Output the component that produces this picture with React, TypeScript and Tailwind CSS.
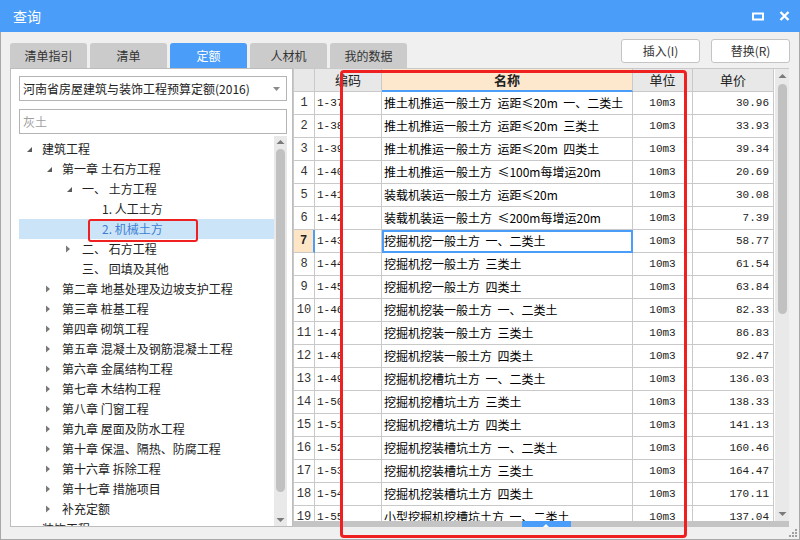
import React from 'react';

const rows: [string, string, string][] = [
  ['1-37', '推土机推运一般土方  运距≤20m  一、二类土', '30.96'],
  ['1-38', '推土机推运一般土方  运距≤20m  三类土', '33.93'],
  ['1-39', '推土机推运一般土方  运距≤20m  四类土', '39.34'],
  ['1-40', '推土机推运一般土方  ≤100m每增运20m', '20.69'],
  ['1-41', '装载机装运一般土方  运距≤20m', '30.08'],
  ['1-42', '装载机装运一般土方  ≤200m每增运20m', '7.39'],
  ['1-43', '挖掘机挖一般土方  一、二类土', '58.77'],
  ['1-44', '挖掘机挖一般土方  三类土', '61.54'],
  ['1-45', '挖掘机挖一般土方  四类土', '63.84'],
  ['1-46', '挖掘机挖装一般土方  一、二类土', '82.33'],
  ['1-47', '挖掘机挖装一般土方  三类土', '86.83'],
  ['1-48', '挖掘机挖装一般土方  四类土', '92.47'],
  ['1-49', '挖掘机挖槽坑土方  一、二类土', '136.03'],
  ['1-50', '挖掘机挖槽坑土方  三类土', '138.33'],
  ['1-51', '挖掘机挖槽坑土方  四类土', '141.13'],
  ['1-52', '挖掘机挖装槽坑土方  一、二类土', '160.46'],
  ['1-53', '挖掘机挖装槽坑土方  三类土', '164.47'],
  ['1-54', '挖掘机挖装槽坑土方  四类土', '170.11'],
  ['1-55', '小型挖掘机挖槽坑土方  一、二类土', '137.04'],
];

type TreeNode = { label: string; level: number; arrow?: 'open' | 'closed'; selected?: boolean };

const tree: TreeNode[] = [
  { label: '建筑工程', level: 0, arrow: 'open' },
  { label: '第一章 土石方工程', level: 1, arrow: 'open' },
  { label: '一、 土方工程', level: 2, arrow: 'open' },
  { label: '1. 人工土方', level: 3 },
  { label: '2. 机械土方', level: 3, selected: true },
  { label: '二、 石方工程', level: 2, arrow: 'closed' },
  { label: '三、 回填及其他', level: 2 },
  { label: '第二章 地基处理及边坡支护工程', level: 1, arrow: 'closed' },
  { label: '第三章 桩基工程', level: 1, arrow: 'closed' },
  { label: '第四章 砌筑工程', level: 1, arrow: 'closed' },
  { label: '第五章 混凝土及钢筋混凝土工程', level: 1, arrow: 'closed' },
  { label: '第六章 金属结构工程', level: 1, arrow: 'closed' },
  { label: '第七章 木结构工程', level: 1, arrow: 'closed' },
  { label: '第八章 门窗工程', level: 1, arrow: 'closed' },
  { label: '第九章 屋面及防水工程', level: 1, arrow: 'closed' },
  { label: '第十章 保温、隔热、防腐工程', level: 1, arrow: 'closed' },
  { label: '第十六章 拆除工程', level: 1, arrow: 'closed' },
  { label: '第十七章 措施项目', level: 1, arrow: 'closed' },
  { label: '补充定额', level: 1, arrow: 'closed' },
  { label: '装饰工程', level: 0 },
];

const tabs = ['清单指引', '清单', '定额', '人材机', '我的数据'];

const indentClass = ['pl-[7px]', 'pl-[27px]', 'pl-[47px]', 'pl-[67px]'];

const TreeArrow = ({ kind }: { kind?: 'open' | 'closed' }) => {
  if (kind === 'open')
    return (
      <svg width="16" height="8" viewBox="0 0 16 8" className="shrink-0">
        <polygon points="1,7 6,7 6,2" fill="#5a5a5a" />
      </svg>
    );
  if (kind === 'closed')
    return (
      <svg width="16" height="8" viewBox="0 0 16 8" className="shrink-0">
        <polygon points="0,0.5 4,4 0,7.5" fill="#7a7a7a" />
      </svg>
    );
  return <span className="w-4 shrink-0" />;
};

const ScrollArrow = ({ down }: { down?: boolean }) => (
  <svg width="13" height="8" viewBox="0 0 13 8">
    <polygon points={down ? '2.5,2 10.5,2 6.5,6' : '2.5,6 10.5,6 6.5,2'} fill="#7a7a7a" />
  </svg>
);

const cell = 'border-r border-b border-[#c9c9c9] flex items-center overflow-hidden whitespace-pre';
const mono = { fontFamily: '"Liberation Mono", "DejaVu Sans Mono", monospace' };

export default function App() {
  return (
    <div
      className="relative w-[800px] h-[540px] flex flex-col overflow-hidden text-[12px] text-[#222]"
      style={{ fontFamily: '"Noto Sans CJK SC", "Noto Sans", sans-serif' }}
    >
      {/* Title bar */}
      <div className="h-8 shrink-0 bg-[#4a9df8] flex items-center pl-[13px] text-white text-[14px]">
        <span>查询</span>
        <div className="ml-auto mr-[10px] flex items-center gap-[15px]">
          <svg width="12" height="9" viewBox="0 0 12 9">
            <rect x="1" y="1.5" width="10" height="6" fill="none" stroke="#fff" strokeWidth="2" />
          </svg>
          <svg width="11" height="10" viewBox="0 0 11 10">
            <path d="M1.5 1 L9.5 9 M9.5 1 L1.5 9" stroke="#fff" strokeWidth="2.4" />
          </svg>
        </div>
      </div>

      <div className="flex-1 flex flex-col bg-[#f0f0f0] border-x border-b border-[#a8a8a8]">
        {/* Tabs + buttons */}
        <div className="h-[36px] shrink-0 flex pl-[9px] pr-[9px]">
          <div className="self-end flex gap-[3px]">
            {tabs.map((t) => (
              <div
                key={t}
                className={`w-[77px] h-[25px] rounded-t-[3px] flex items-center justify-center ${
                  t === '定额' ? 'bg-[#4a9df8] text-white' : 'bg-[#cbcbcb] text-[#333]'
                }`}
              >
                {t}
              </div>
            ))}
          </div>
          <div className="ml-auto mt-[7px] flex gap-[11px]">
            <button className="w-[79px] h-[24px] bg-white border border-[#c4c4c4] rounded-[3px] text-[#333]">插入(I)</button>
            <button className="w-[79px] h-[24px] bg-white border border-[#c4c4c4] rounded-[3px] text-[#333]">替换(R)</button>
          </div>
        </div>

        {/* Content */}
        <div className="h-[459px] shrink-0 flex pl-[9px]">
          {/* Left panel */}
          <div className="w-[283px] h-full bg-white border border-[#bdbdbd] flex flex-col pl-[8px] pr-[5px] pt-[7px]">
            <div className="h-[25px] shrink-0 border border-[#b4b4b4] flex items-center pl-[3px] pr-[6px]">
              <span className="text-[#222]">河南省房屋建筑与装饰工程预算定额(2016)</span>
              <svg width="7" height="4" viewBox="0 0 7 4" className="ml-auto">
                <polygon points="0,0 7,0 3.5,4" fill="#8a8a8a" />
              </svg>
            </div>
            <div className="h-[25px] shrink-0 mt-[8px] border border-[#b4b4b4] flex items-center pl-[3px] text-[#a0a0a0]">
              灰土
            </div>
            <div className="flex-1 mt-[2px] flex overflow-hidden relative">
              <div className="flex-1 pt-[3px] overflow-hidden">
                {tree.map((n, i) => (
                  <div
                    key={i}
                    className={`h-[20px] flex items-center whitespace-pre ${indentClass[n.level]} ${
                      n.selected ? 'bg-[#cce4f8] text-[#3b7fd6]' : ''
                    }`}
                  >
                    <TreeArrow kind={n.arrow} />
                    <span>{n.label}</span>
                  </div>
                ))}
              </div>
              <div className="w-[13px] bg-[#e9e9e9] flex flex-col items-center">
                <div className="h-[12px] flex items-center">
                  <ScrollArrow />
                </div>
                <div className="w-[9px] h-[343px] mt-[1px] rounded-full bg-[#c1c1c1]" />
                <div className="mt-auto h-[12px] flex items-center">
                  <ScrollArrow down />
                </div>
              </div>
            </div>
          </div>

          {/* Grid */}
          <div className="w-[496px] h-full flex flex-col border-t border-[#c9c9c9]">
            <div className="h-[452px] flex">
              <div className="flex-1 overflow-hidden border-l border-[#c9c9c9] bg-white">
                <div className="grid grid-cols-[21px_67px_251px_60px_81px]">
                  <div className={`${cell} h-[23px] bg-[#e8e8e8]`} />
                  <div className={`${cell} h-[23px] bg-[#e8e8e8] justify-center text-[13px]`}>编码</div>
                  <div className={`${cell} h-[23px] bg-[#fde8cd] justify-center text-[13px] font-bold border-b-2 border-b-[#4a9df8]`}>名称</div>
                  <div className={`${cell} h-[23px] bg-[#e8e8e8] justify-center text-[13px]`}>单位</div>
                  <div className={`${cell} h-[23px] bg-[#e8e8e8] justify-center text-[13px]`}>单价</div>
                  {rows.map((r, i) => {
                    const sel = i === 6;
                    return (
                      <React.Fragment key={r[0]}>
                        <div
                          className={`${cell} h-[23px] justify-center text-[12px] ${
                            sel ? 'bg-[#fde5c6] font-bold border-r-2 border-r-[#4a9df8] text-[#222]' : 'text-[#333]'
                          }`}
                          style={mono}
                        >
                          {i + 1}
                        </div>
                        <div className={`${cell} h-[23px] pl-[2px] text-[11px]`} style={mono}>
                          {r[0]}
                        </div>
                        <div
                          className={`${cell} h-[23px] pl-[2px] text-black ${
                            sel ? 'outline-2 -outline-offset-2 outline-[#4a9df8]' : ''
                          }`}
                        >
                          {r[1]}
                        </div>
                        <div className={`${cell} h-[23px] justify-center text-[11px]`} style={mono}>
                          10m3
                        </div>
                        <div className={`${cell} h-[23px] justify-end pr-[4px] text-[11px]`} style={mono}>
                          {r[2]}
                        </div>
                      </React.Fragment>
                    );
                  })}
                </div>
              </div>
              <div className="w-[14px] bg-[#e9e9e9] flex flex-col items-center">
                <div className="h-[13px] flex items-center">
                  <ScrollArrow />
                </div>
                <div className="w-[9px] h-[230px] mt-[2px] rounded-full bg-[#c1c1c1]" />
                <div className="mt-auto h-[14px] flex items-center">
                  <ScrollArrow down />
                </div>
              </div>
            </div>
            <div className="h-[6px] bg-[#c4c4c4] flex justify-center pl-[10px]">
              <div className="w-[49px] h-full bg-[#4a9df8] flex items-end justify-center">
                <svg width="6" height="3" viewBox="0 0 6 3">
                  <polygon points="0,3 6,3 3,0" fill="#fff" />
                </svg>
              </div>
            </div>
          </div>
        </div>

        {/* Status / grip */}
        <div className="flex-1 flex items-end justify-end pr-[2px] pb-[2px]">
          <svg width="8" height="8" viewBox="0 0 8 8">
            <rect x="6" y="0" width="2" height="2" fill="#a0a0a0" />
            <rect x="3" y="3" width="2" height="2" fill="#a0a0a0" />
            <rect x="6" y="3" width="2" height="2" fill="#a0a0a0" />
            <rect x="0" y="6" width="2" height="2" fill="#a0a0a0" />
            <rect x="3" y="6" width="2" height="2" fill="#a0a0a0" />
            <rect x="6" y="6" width="2" height="2" fill="#a0a0a0" />
          </svg>
        </div>
      </div>

      {/* Annotation boxes */}
      <div className="absolute left-[88px] top-[219px] w-[110px] h-[23px] border-2 border-[#ee2020] rounded-[3px]" />
      <div className="absolute left-[340px] top-[70px] w-[347px] h-[468px] border-[3px] border-[#ee2020] rounded-[4px]" />
    </div>
  );
}
